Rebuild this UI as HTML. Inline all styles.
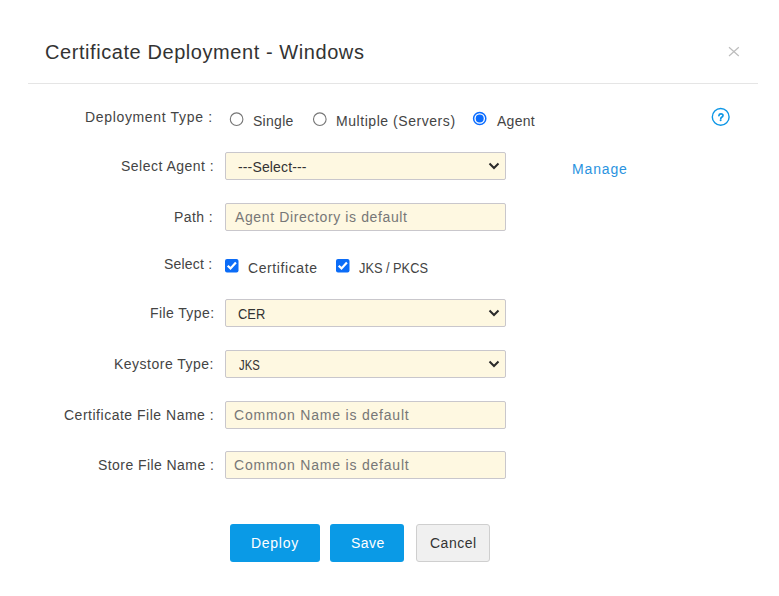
<!DOCTYPE html>
<html><head><meta charset="utf-8"><style>
html,body{margin:0;padding:0;background:#fff;width:779px;height:596px;overflow:hidden;position:relative}
body{font-family:"Liberation Sans",sans-serif}
.tx{position:absolute;white-space:pre;line-height:normal;transform-origin:0 0}
.hr{position:absolute;left:28px;top:83px;width:730px;height:1px;background:#e5e5e5}
.box{position:absolute;left:225px;width:279px;border:1px solid #c9c7cc;border-radius:2px;background:#fef8e1}
.chev{position:absolute;left:487.5px}
.btn{position:absolute;top:524px;height:38px;border-radius:3px}
</style></head><body>
<div class="hr"></div>
<svg style="position:absolute;left:727px;top:45px" width="14" height="13" viewBox="0 0 14 13"><path d="M2 2.3 L11.8 11 M11.8 2.3 L2 11" stroke="#bdbdbd" stroke-width="1.2" fill="none"/></svg>
<svg style="position:absolute;left:229px;top:112px" width="16" height="15" viewBox="0 0 16 15"><circle cx="7.6" cy="7.2" r="6.3" fill="#fff" stroke="#767676" stroke-width="1.1"/></svg>
<svg style="position:absolute;left:312px;top:112px" width="16" height="15" viewBox="0 0 16 15"><circle cx="7.8" cy="7.2" r="6.3" fill="#fff" stroke="#767676" stroke-width="1.1"/></svg>
<svg style="position:absolute;left:472px;top:111px" width="16" height="16" viewBox="0 0 16 16"><circle cx="7.7" cy="7.5" r="6.1" fill="#fff" stroke="#0a6cff" stroke-width="1.5"/><circle cx="7.7" cy="7.5" r="4" fill="#0a6cff"/></svg>
<svg style="position:absolute;left:710px;top:106px" width="22" height="22" viewBox="0 0 22 22"><circle cx="10.7" cy="10.9" r="8.4" fill="none" stroke="#0c96e6" stroke-width="1.4"/><path d="M8.9 9.6 Q9.1 7.9 11 7.9 Q13.1 7.9 13 9.5 Q12.9 10.6 11.7 11.2 Q10.9 11.7 10.8 12.6" fill="none" stroke="#0c96e6" stroke-width="1.7" stroke-linecap="round"/><circle cx="10.6" cy="14.2" r="1" fill="#0c96e6"/></svg>
<div class="box" style="top:152px;height:26px"></div><div class="box" style="top:203px;height:26px"></div><div class="box" style="top:299px;height:26px"></div><div class="box" style="top:350px;height:26px"></div><div class="box" style="top:401px;height:26px"></div><div class="box" style="top:451px;height:26px"></div>
<svg class="chev" style="top:162px" width="12" height="8" viewBox="0 0 12 8"><path d="M1.5 1.5 L6 6 L10.5 1.5" fill="none" stroke="#2a2a2a" stroke-width="2"/></svg><svg class="chev" style="top:309px" width="12" height="8" viewBox="0 0 12 8"><path d="M1.5 1.5 L6 6 L10.5 1.5" fill="none" stroke="#2a2a2a" stroke-width="2"/></svg><svg class="chev" style="top:360px" width="12" height="8" viewBox="0 0 12 8"><path d="M1.5 1.5 L6 6 L10.5 1.5" fill="none" stroke="#2a2a2a" stroke-width="2"/></svg>
<svg style="position:absolute;left:224px;top:258px" width="16" height="16" viewBox="0 0 16 16"><rect x="1" y="1" width="13.5" height="13.5" rx="2" fill="#0b6cf7"/><path d="M3.7 7.7 L6.5 10.4 L11.9 4.4" fill="none" stroke="#fff" stroke-width="2.2"/></svg>
<svg style="position:absolute;left:335px;top:258px" width="16" height="16" viewBox="0 0 16 16"><rect x="1" y="1" width="13.5" height="13.5" rx="2" fill="#0b6cf7"/><path d="M3.7 7.7 L6.5 10.4 L11.9 4.4" fill="none" stroke="#fff" stroke-width="2.2"/></svg>
<div class="btn" style="left:230px;width:90px;background:#0a9ae6"></div>
<div class="btn" style="left:330px;width:74px;background:#0a9ae6"></div>
<div class="btn" style="left:416px;width:72px;height:36px;background:#f0f0f0;border:1px solid #cfcfcf"></div>
<div class="tx" style="left:45px;top:41px;font-size:20px;color:#333;letter-spacing:0.57px">Certificate Deployment - Windows</div><div class="tx" style="left:85px;top:109px;font-size:14px;color:#444;letter-spacing:0.66px">Deployment Type :</div><div class="tx" style="left:253px;top:113px;font-size:14px;color:#444;letter-spacing:0.28px">Single</div><div class="tx" style="left:336px;top:113px;font-size:14px;color:#444;letter-spacing:0.55px">Multiple (Servers)</div><div class="tx" style="left:497px;top:113px;font-size:14px;color:#444;letter-spacing:0.27px">Agent</div><div class="tx" style="left:121px;top:158px;font-size:14px;color:#444;letter-spacing:0.48px">Select Agent :</div><div class="tx" style="left:238px;top:159px;font-size:14px;color:#333;letter-spacing:0.15px">---Select---</div><div class="tx" style="left:572px;top:161px;font-size:14px;color:#2a93e0;letter-spacing:0.86px">Manage</div><div class="tx" style="left:174px;top:209px;font-size:14px;color:#444;letter-spacing:0.42px">Path :</div><div class="tx" style="left:235px;top:209px;font-size:14px;color:#777;letter-spacing:0.62px">Agent Directory is default</div><div class="tx" style="left:164px;top:256px;font-size:14px;color:#444;letter-spacing:0.21px">Select :</div><div class="tx" style="left:248px;top:260px;font-size:14px;color:#444;letter-spacing:0.59px">Certificate</div><div class="tx" style="left:359px;top:260px;font-size:14px;color:#444;transform:scaleX(0.913)">JKS / PKCS</div><div class="tx" style="left:150px;top:305px;font-size:14px;color:#444;letter-spacing:0.4px">File Type:</div><div class="tx" style="left:238px;top:306px;font-size:14px;color:#333;transform:scaleX(0.921)">CER</div><div class="tx" style="left:114px;top:356px;font-size:14px;color:#444;letter-spacing:0.49px">Keystore Type:</div><div class="tx" style="left:239px;top:357px;font-size:14px;color:#333;transform:scaleX(0.808)">JKS</div><div class="tx" style="left:64px;top:407px;font-size:14px;color:#444;letter-spacing:0.51px">Certificate File Name :</div><div class="tx" style="left:234px;top:407px;font-size:14px;color:#777;letter-spacing:0.8px">Common Name is default</div><div class="tx" style="left:98px;top:457px;font-size:14px;color:#444;letter-spacing:0.43px">Store File Name :</div><div class="tx" style="left:234px;top:457px;font-size:14px;color:#777;letter-spacing:0.8px">Common Name is default</div><div class="tx" style="left:251px;top:535px;font-size:14px;color:#fff;letter-spacing:0.72px">Deploy</div><div class="tx" style="left:351px;top:535px;font-size:14px;color:#fff;letter-spacing:0.43px">Save</div><div class="tx" style="left:430px;top:535px;font-size:14px;color:#333;letter-spacing:0.5px">Cancel</div>
</body></html>
